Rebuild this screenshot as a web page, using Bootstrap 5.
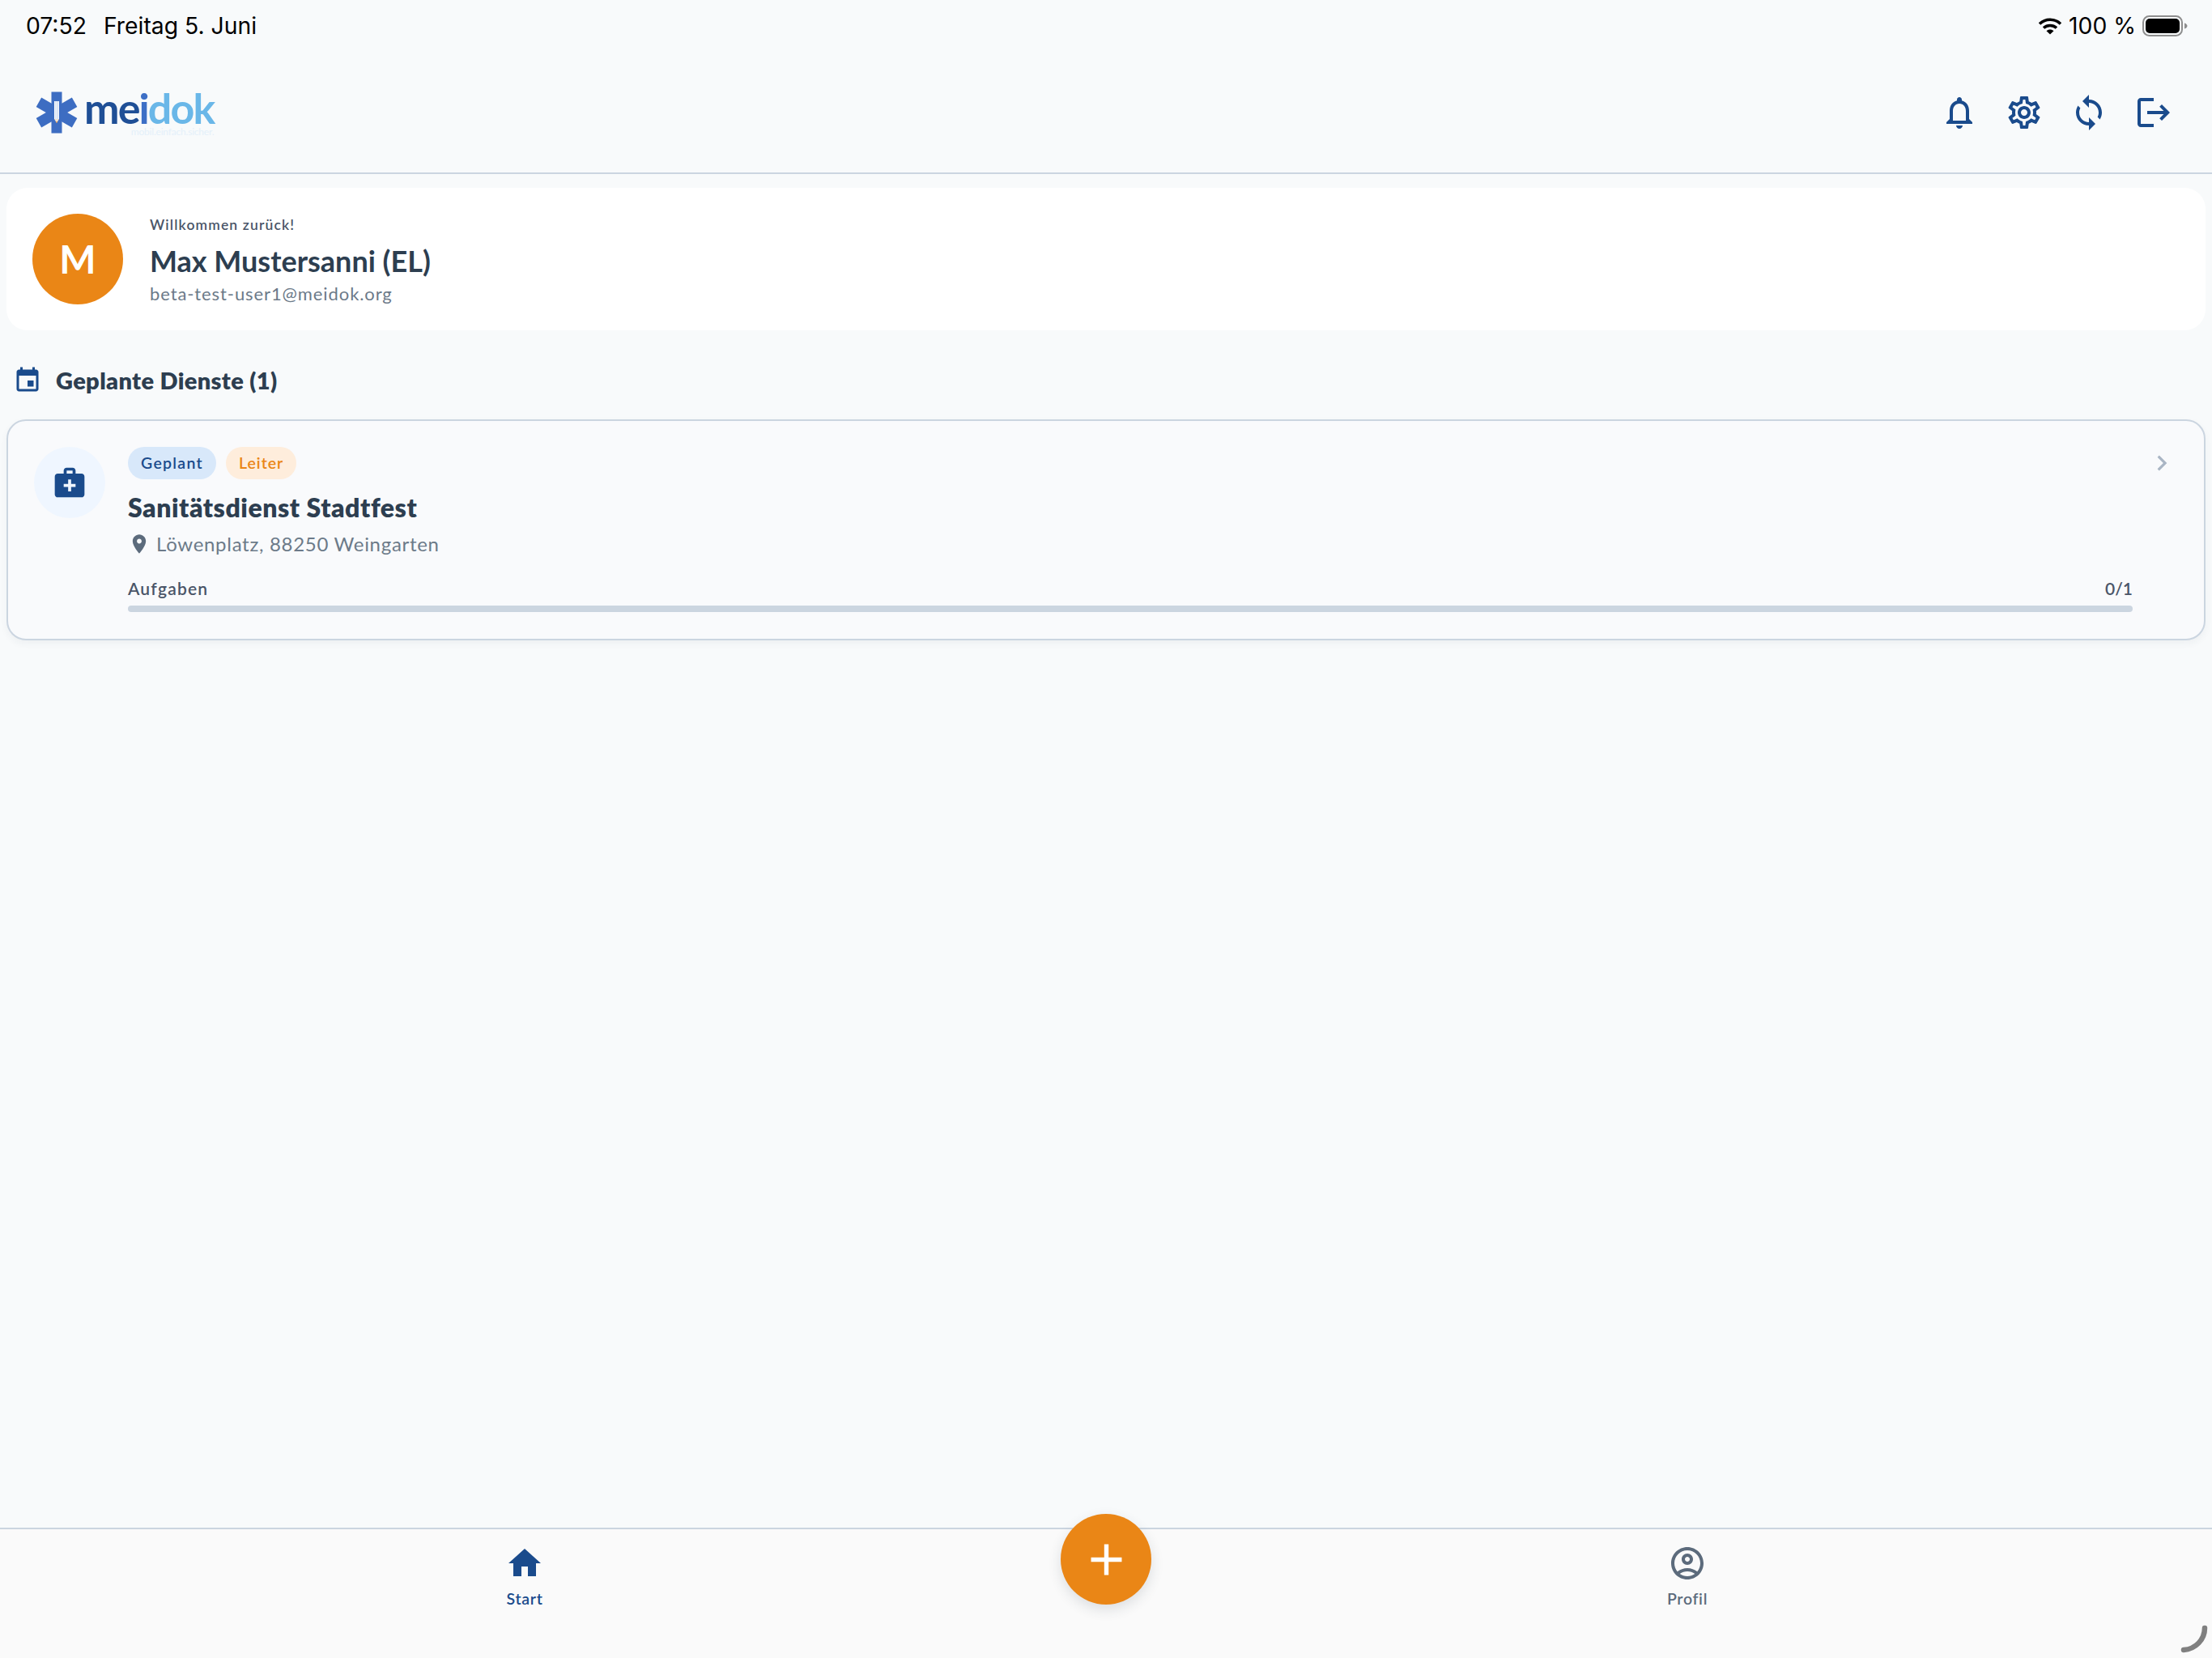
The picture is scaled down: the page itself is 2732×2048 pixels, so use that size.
<!DOCTYPE html>
<html lang="de">
<head>
  <meta charset="UTF-8" />
  <title>meidok</title>
  <meta name="viewport" content="width=device-width, initial-scale=1" />
  <link href="https://cdn.jsdelivr.net/npm/bootstrap@5.3.3/dist/css/bootstrap.min.css" rel="stylesheet" />
  <style>
    body { background: #f8fafb; font-family: "Lato", "Liberation Sans", sans-serif; color: #2d3748; height: 100vh; overflow: hidden; }
    .md-icon { fill: currentColor; flex-shrink: 0; display: block; }
    .md-navy { color: #1a4b8c; }

    .md-status { height: 64px; padding: 0 30px 0 32px; font-family: "Inter", "Liberation Sans", sans-serif; font-size: 28.3px; color: #000; }
    .md-status-gap { gap: 21px; }

    .md-header { height: 151px; padding: 0 48px 0 44px; border-bottom: 2px solid #cbd5e0; }
    .md-head-icons { gap: 32px; }
    .md-head-icons .md-icon { width: 48px; height: 48px; }
    .md-logo-word { font-family: "Lato", sans-serif; font-size: 52px; font-weight: 700; line-height: 48px; letter-spacing: -1.9px; margin-left: 8px; }
    .md-logo-a { color: #1f4f96; }
    .md-logo-b { color: #3d6fc6; }
    .md-logo-c { color: #6ab7e8; }
    .md-tagline { font-size: 12px; font-weight: 400; line-height: 11px; color: #e4f0fa; text-align: right; letter-spacing: -.2px; }

    .md-main { padding: 17px 8px 0 8px; }
    .md-welcome { background: #fff; border: 0; border-radius: 26px; padding: 32px; gap: 33px; }
    .md-avatar { width: 112px; height: 112px; background: #ea8616; color: #fff; font-size: 48px; font-weight: 700; }
    .md-person { padding-top: 4px; }
    .md-hello { font-size: 17.5px; font-weight: 600; line-height: 20px; letter-spacing: 1.15px; color: #4a5568; }
    .md-name { font-size: 36px; font-weight: 700; line-height: 46px; margin: 11px 0 5px; color: #2d3e50; }
    .md-mail { font-size: 22px; line-height: 26px; letter-spacing: .9px; color: #6c7a89; }

    .md-section { padding: 44px 0 0 8px; gap: 17px; height: 110px; align-items: flex-start; }
    .md-section .md-icon { width: 36px; height: 36px; }
    .md-section h2 { font-size: 29px; font-weight: 800; line-height: 36px; letter-spacing: .35px; margin: 0; color: #2d3e50; }

    .md-duty { background: #f9fafc; border: 2px solid #cbd5e0; border-radius: 24px; box-shadow: 0 4px 10px rgba(45,55,72,.05); padding: 32px 31px 33px 32px; gap: 28px; }
    .md-duty-icon { width: 88px; height: 88px; background: #eff6ff; }
    .md-duty-icon .md-icon { width: 44px; height: 44px; }
    .md-pill-row { gap: 12px; }
    .md-pill { font-size: 19.5px; font-weight: 600; line-height: 40px; height: 40px; padding: 0 16px; letter-spacing: 1.3px; }
    .md-pill-blue { background: #d8e8fa; color: #1a4b8c; }
    .md-pill-orange { background: #feeddc; color: #ea8616; letter-spacing: 1px; }
    .md-duty-title { font-size: 32px; font-weight: 800; line-height: 40px; letter-spacing: .55px; margin: 15px 0 10px; color: #2d3e50; }
    .md-place { font-size: 24px; line-height: 30px; letter-spacing: .7px; color: #6c7a89; gap: 7px; }
    .md-place .md-icon { width: 28px; height: 28px; color: #5c6b7c; }
    .md-tasks { font-size: 21px; font-weight: 600; line-height: 26px; margin-top: 27px; color: #4a5568; letter-spacing: 1.2px; }
    .md-count { letter-spacing: 0; }
    .md-bar { height: 8px; border-radius: 4px; background: #cbd5e0; margin-top: 8px; }
    .md-chevron { width: 38px; height: 38px; color: #a9b5c4; margin: 1px 2.5px 0 -11.5px; }

    .md-tabbar { height: 161px; background: #fafafa; border-top: 2px solid #cbd5e0; }
    .md-tab { flex: 1; padding-top: 18px; font-size: 19.5px; font-weight: 600; line-height: 22px; letter-spacing: .7px; color: #5c6b7c; }
    .md-tab .md-icon { width: 48px; height: 48px; margin-bottom: 9px; }
    .md-tab-on { color: #1a4b8c; }
    .md-tab-gap { width: 140px; }
    .md-fab { position: absolute; left: 50%; top: -19px; transform: translateX(-50%); width: 112px; height: 112px; background: #ea8616; border: 0; color: #fff; box-shadow: 0 6px 16px rgba(45,55,72,.14); }
    .md-fab .md-icon { width: 65px; height: 65px; }
    .md-corner { position: fixed; right: 4px; bottom: 5px; width: 36px; height: 36px; fill: none; stroke: #808080; stroke-width: 6.5; stroke-linecap: round; }
  </style>
</head>
<body class="d-flex flex-column">

  <!-- Statusleiste -->
  <div class="md-status d-flex justify-content-between align-items-center">
    <div class="d-flex md-status-gap"><span>07:52</span><span>Freitag 5. Juni</span></div>
    <div class="d-flex align-items-center gap-2">
      <svg width="30" height="22" viewBox="0 0 30 22" fill="none" stroke="#000" stroke-width="3.6">
        <path d="M2 8.5C9.5 1.5 20.5 1.5 28 8.5" />
        <path d="M7 13.5C11.5 9.5 18.5 9.5 23 13.5" />
        <path d="M10.5 17.2C13 15 17 15 19.5 17.2L15 21.5z" fill="#000" stroke="none" />
      </svg>
      <span>100 %</span>
      <svg width="56" height="26" viewBox="0 0 56 26">
        <rect x="1" y="1" width="48" height="24" rx="7.5" fill="none" stroke="#8e8e8e" stroke-width="2" />
        <rect x="4" y="4" width="42" height="18" rx="5" fill="#000" />
        <path d="M52 9.5c2 .5 3.5 2 3.5 3.500s-1.500 3-3.500 3.500z" fill="#8e8e8e" />
      </svg>
    </div>
  </div>

  <!-- Kopfzeile -->
  <header class="md-header d-flex justify-content-between align-items-center">
    <div class="d-flex align-items-center">
      <svg width="52" height="52" viewBox="0 0 52 52">
        <g fill="#3d6dc2">
          <rect x="19.500" y="0.500" width="13" height="51" />
          <rect x="19.500" y="0.500" width="13" height="51" transform="rotate(60 26 26)" />
          <rect x="19.500" y="0.500" width="13" height="51" transform="rotate(-60 26 26)" />
        </g>
        <rect x="23" y="12" width="6" height="22" fill="#fff" />
        <rect x="24.500" y="12" width="1" height="22" fill="#b9cdea" />
        <rect x="26.800" y="12" width="1" height="22" fill="#b9cdea" />
        <path d="M23 34h6l-3 5z" fill="#f3e3cf" />
        <path d="M25 37.300h2l-1 1.700z" fill="#ea8616" />
      </svg>
      <div class="md-logo-word">
        <div><span class="md-logo-a">me</span><span class="md-logo-b">i</span><span class="md-logo-c">dok</span></div>
        <div class="md-tagline">mobil.einfach.sicher.</div>
      </div>
    </div>
    <div class="md-head-icons d-flex md-navy">
      <svg class="md-icon" viewBox="0 0 24 24"><path d="M12 22c1.100 0 2-.9 2-2h-4c0 1.100.9 2 2 2zm6-6v-5c0-3.070-1.630-5.640-4.500-6.320V4c0-.83-.67-1.500-1.500-1.500s-1.500.67-1.500 1.500v.68C7.640 5.360 6 7.920 6 11v5l-2 2v1h16v-1l-2-2zm-2 1H8v-6c0-2.480 1.510-4.500 4-4.500s4 2.020 4 4.500v6z" /></svg>
      <svg class="md-icon" viewBox="0 0 24 24"><path d="M19.430 12.980c.04-.32.07-.64.07-.98 0-.34-.03-.66-.07-.98l2.110-1.650c.19-.15.24-.42.12-.64l-2-3.460c-.09-.16-.26-.25-.44-.25-.06 0-.12.01-.17.03l-2.490 1c-.52-.4-1.080-.73-1.690-.98l-.38-2.650C14.460 2.180 14.250 2 14 2h-4c-.25 0-.46.18-.49.42l-.38 2.650c-.61.25-1.170.59-1.690.98l-2.490-1c-.06-.02-.12-.03-.18-.03-.17 0-.34.09-.43.25l-2 3.460c-.13.22-.07.49.12.64l2.110 1.650c-.04.32-.07.65-.07.98 0 .33.03.66.07.98l-2.110 1.650c-.19.15-.24.42-.12.64l2 3.460c.09.16.26.25.44.25.06 0 .12-.01.17-.03l2.490-1c.52.4 1.080.73 1.690.98l.38 2.650c.03.24.24.42.49.42h4c.25 0 .46-.18.49-.42l.38-2.650c.61-.25 1.170-.59 1.690-.98l2.490 1c.06.02.12.03.18.03.17 0 .34-.09.43-.25l2-3.460c.12-.22.07-.49-.12-.64l-2.110-1.650zm-1.980-1.710c.04.31.05.52.05.73 0 .21-.02.43-.05.73l-.14 1.130.89.7 1.080.84-.7 1.210-1.270-.51-1.040-.42-.9.68c-.43.32-.84.56-1.250.73l-1.060.43-.16 1.130-.2 1.350h-1.400l-.19-1.350-.16-1.130-1.060-.43c-.43-.18-.83-.41-1.230-.71l-.91-.7-1.060.43-1.270.51-.7-1.210 1.080-.84.89-.7-.14-1.130c-.03-.31-.05-.54-.05-.74s.02-.43.05-.73l.14-1.130-.89-.7-1.080-.84.7-1.210 1.270.51 1.040.42.9-.68c.43-.32.84-.56 1.250-.73l1.060-.43.16-1.130.2-1.350h1.390l.19 1.350.16 1.130 1.060.43c.43.18.83.41 1.230.71l.91.7 1.060-.43 1.270-.51.7 1.210-1.070.85-.89.7.14 1.130zM12 8c-2.210 0-4 1.790-4 4s1.790 4 4 4 4-1.790 4-4-1.790-4-4-4zm0 6c-1.100 0-2-.9-2-2s.9-2 2-2 2 .9 2 2-.9 2-2 2z" /></svg>
      <svg class="md-icon" viewBox="0 0 24 24"><path d="M12 4V1L8 5l4 4V6c3.310 0 6 2.690 6 6 0 1.010-.25 1.970-.7 2.800l1.460 1.460C19.540 15.030 20 13.570 20 12c0-4.420-3.580-8-8-8zm0 14c-3.310 0-6-2.690-6-6 0-1.010.25-1.970.7-2.800L5.240 7.740C4.460 8.970 4 10.430 4 12c0 4.420 3.580 8 8 8v3l4-4-4-4v3z" /></svg>
      <svg class="md-icon" viewBox="0 0 24 24"><path d="M17 7l-1.410 1.410L18.170 11H8v2h10.170l-2.580 2.580L17 17l5-5zM4 5h8V3H4c-1.100 0-2 .9-2 2v14c0 1.100.9 2 2 2h8v-2H4V5z" /></svg>
    </div>
  </header>

  <main class="md-main flex-grow-1">
    <!-- Begruessung -->
    <div class="card md-welcome flex-row align-items-center">
      <div class="md-avatar rounded-circle d-flex align-items-center justify-content-center">M</div>
      <div class="md-person">
        <div class="md-hello">Willkommen zurück!</div>
        <div class="md-name">Max Mustersanni (EL)</div>
        <div class="md-mail">beta-test-user1@meidok.org</div>
      </div>
    </div>

    <!-- Geplante Dienste -->
    <div class="md-section d-flex">
      <svg class="md-icon md-navy" viewBox="0 0 24 24"><path d="M17 12h-5v5h5v-5zM16 1v2H8V1H6v2H5c-1.110 0-1.990.9-1.990 2L3 19c0 1.100.89 2 2 2h14c1.100 0 2-.9 2-2V5c0-1.100-.9-2-2-2h-1V1h-2zm3 18H5V8h14v11z" /></svg>
      <h2>Geplante Dienste (1)</h2>
    </div>

    <div class="card md-duty flex-row align-items-start">
      <div class="md-duty-icon rounded-circle d-flex align-items-center justify-content-center md-navy flex-shrink-0">
        <svg class="md-icon" viewBox="0 0 24 24"><path d="M20 6h-4V4c0-1.100-.9-2-2-2h-4c-1.100 0-2 .9-2 2v2H4c-1.100 0-2 .9-2 2v12c0 1.100.9 2 2 2h16c1.100 0 2-.9 2-2V8c0-1.100-.9-2-2-2zM10 4h4v2h-4V4zm6 11h-3v3h-2v-3H8v-2h3v-3h2v3h3v2z" /></svg>
      </div>
      <div class="flex-grow-1">
        <div class="d-flex md-pill-row">
          <span class="md-pill md-pill-blue rounded-pill">Geplant</span>
          <span class="md-pill md-pill-orange rounded-pill">Leiter</span>
        </div>
        <div class="md-duty-title">Sanitätsdienst Stadtfest</div>
        <div class="md-place d-flex align-items-center">
          <svg class="md-icon" viewBox="0 0 24 24"><path d="M12 2C8.130 2 5 5.130 5 9c0 5.250 7 13 7 13s7-7.750 7-13c0-3.870-3.130-7-7-7zm0 9.500c-1.380 0-2.500-1.120-2.500-2.500s1.120-2.500 2.500-2.500 2.500 1.120 2.500 2.500-1.120 2.500-2.500 2.500z" /></svg>
          <span>Löwenplatz, 88250 Weingarten</span>
        </div>
        <div class="md-tasks d-flex justify-content-between"><span>Aufgaben</span><span class="md-count">0/1</span></div>
        <div class="md-bar"></div>
      </div>
      <svg class="md-icon md-chevron" viewBox="0 0 24 24"><path d="M10 6L8.590 7.410 13.170 12l-4.580 4.590L10 18l6-6z" /></svg>
    </div>
  </main>

  <!-- Tabbar -->
  <nav class="md-tabbar d-flex position-relative">
    <div class="md-tab md-tab-on d-flex flex-column align-items-center">
      <svg class="md-icon" viewBox="0 0 24 24"><path d="M10 20v-6h4v6h5v-8h3L12 3 2 12h3v8z" /></svg>
      <span>Start</span>
    </div>
    <div class="md-tab-gap"></div>
    <div class="md-tab d-flex flex-column align-items-center">
      <svg class="md-icon" viewBox="0 0 24 24"><path d="M12 2C6.480 2 2 6.480 2 12s4.480 10 10 10 10-4.480 10-10S17.520 2 12 2zM7.350 18.500C8.660 17.560 10.260 17 12 17s3.340.56 4.650 1.500c-1.310.94-2.910 1.500-4.650 1.500s-3.340-.56-4.650-1.500zm10.790-1.380C16.450 15.800 14.320 15 12 15s-4.450.8-6.140 2.120C4.700 15.730 4 13.950 4 12c0-4.420 3.580-8 8-8s8 3.580 8 8c0 1.950-.7 3.730-1.860 5.120zM12 6c-1.930 0-3.500 1.570-3.500 3.500S10.070 13 12 13s3.500-1.570 3.500-3.500S13.930 6 12 6zm0 5c-.83 0-1.500-.67-1.500-1.500S11.170 8 12 8s1.500.67 1.500 1.500S12.830 11 12 11z" /></svg>
      <span>Profil</span>
    </div>
    <button class="md-fab btn rounded-circle d-flex align-items-center justify-content-center p-0" type="button" aria-label="Neu">
      <svg class="md-icon" viewBox="0 0 24 24"><path d="M19 13h-6v6h-2v-6H5v-2h6V5h2v6h6v2z" /></svg>
    </button>
  </nav>

  <!-- Scroll-Ecke -->
  <svg class="md-corner" viewBox="0 0 36 36"><path d="M31 4C31 18 20 30 5 31" /></svg>

  <script src="https://cdn.jsdelivr.net/npm/bootstrap@5.3.3/dist/js/bootstrap.bundle.min.js"></script>
</body>
</html>
